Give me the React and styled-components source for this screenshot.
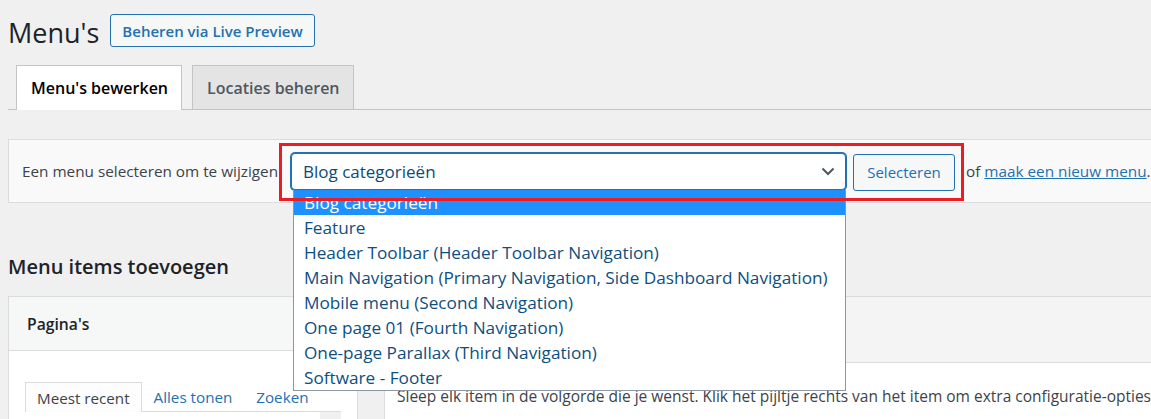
import React from "react";
import styled, { createGlobalStyle } from "styled-components";

const GlobalStyle = createGlobalStyle`
  body {
    margin: 0;
    background: #f0f0f1;
    font-family: "Open Sans", "Noto Sans", sans-serif;
    color: #3c434a;
    overflow: hidden;
  }
`;

const Page = styled.div`
  width: 1170px;
  padding-left: 8px;
  height: 419px;
  overflow: hidden;
`;

const HeaderRow = styled.div`
  display: flex;
  align-items: center;
  gap: 11px;
  padding-top: 14px;
  height: 33px;
`;

const Title = styled.h1`
  margin: 0;
  font-size: 27px;
  font-weight: 400;
  color: #1d2327;
  line-height: 33px;
  padding-top: 3px;
`;

const OutlineButton = styled.a`
  display: inline-flex;
  align-items: center;
  height: 31px;
  padding: 0 11px;
  border: 1px solid #2271b1;
  border-radius: 3px;
  background: #f6f7f7;
  color: #2271b1;
  font-size: 15px;
  font-weight: 600;
  text-decoration: none;
`;

const TabBar = styled.div`
  display: flex;
  gap: 10px;
  margin-top: 18px;
  padding-left: 8px;
  border-bottom: 1px solid #c3c4c7;
  height: 44px;
`;

const Tab = styled.div`
  display: flex;
  align-items: center;
  padding: 0 13px 0 14px;
  border: 1px solid #c3c4c7;
  border-bottom: none;
  background: ${({ active }) => (active ? "#fff" : "#e4e4e4")};
  color: ${({ active }) => (active ? "#000" : "#50575e")};
  font-size: 16px;
  font-weight: 600;
  margin-bottom: ${({ active }) => (active ? "-1px" : "0")};
  height: ${({ active }) => (active ? "44px" : "43px")};
`;

const ManagePanel = styled.div`
  display: flex;
  align-items: center;
  margin-top: 29px;
  height: 62px;
  border: 1px solid #dcdcde;
  background: #f9f9f9;
  padding-left: 13px;
  font-size: 15.3px;
  white-space: nowrap;
`;

const Label = styled.span`
  width: 257px;
  flex: none;
`;

const Highlight = styled.div`
  position: relative;
  display: flex;
  align-items: center;
  align-self: stretch;
  padding: 0 9px 0 12px;

  &::after {
    content: "";
    position: absolute;
    left: 0;
    right: 0;
    top: 3px;
    bottom: 1px;
    border: 3px solid #ec1c24;
    z-index: 10;
    pointer-events: none;
  }
`;

const SelectBox = styled.div`
  position: relative;
  display: flex;
  align-items: center;
  justify-content: space-between;
  width: 555px;
  height: 37px;
  border: 1px solid #2271b1;
  border-radius: 4px;
  box-shadow: 0 0 0 1px #2271b1;
  background: #fff;
  padding: 0 10px 0 11px;
  box-sizing: border-box;
  color: #0a4b78;
  font-size: 17px;
  margin-top: 1px;
`;

const DropdownList = styled.ul`
  position: absolute;
  top: 100%;
  left: 1px;
  width: 553px;
  margin: 1px 0 0;
  padding: 0;
  list-style: none;
  background: #fff;
  border: 1px solid #8a96a3;
  border-top: none;
  box-sizing: border-box;
  z-index: 5;
`;

const Option = styled.li`
  height: 25px;
  line-height: 25px;
  padding-left: 10px;
  font-size: 17.2px;
  white-space: nowrap;
  color: ${({ selected }) => (selected ? "#fff" : "#0e4f7f")};
  background: ${({ selected }) => (selected ? "#1e90ff" : "transparent")};
`;

const SubmitButton = styled.button`
  height: 37px;
  width: 102px;
  margin-left: 7px;
  border: 1px solid #2271b1;
  border-radius: 3px;
  background: #f6f7f7;
  color: #2271b1;
  font-family: inherit;
  font-size: 15px;
  margin-top: 2px;
`;

const Trailing = styled.span`
  padding-left: 2px;
`;

const Link = styled.a`
  color: #2271b1;
  text-decoration: underline;
`;

const Columns = styled.div`
  display: flex;
  align-items: flex-start;
`;

const LeftColumn = styled.div`
  width: 350px;
  flex: none;
`;

const SectionTitle = styled.h2`
  margin: 0;
  padding-top: 50px;
  height: 43px;
  font-size: 20px;
  font-weight: 600;
  color: #1d2327;
  line-height: 28px;
`;

const Accordion = styled.div`
  border: 1px solid #dcdcde;
  background: #fff;
  height: 140px;
`;

const AccordionHead = styled.div`
  height: 53px;
  display: flex;
  align-items: center;
  padding-left: 18px;
  background: #f6f7f7;
  border-bottom: 1px solid #dcdcde;
  font-size: 15.7px;
  font-weight: 600;
  color: #1d2327;
`;

const AccordionBody = styled.div`
  padding: 30px 17px 0 16px;
`;

const InnerTabs = styled.div`
  display: flex;
  align-items: flex-end;
  border-bottom: 1px solid #dcdcde;
  width: 316px;
`;

const InnerTab = styled.div`
  height: 29px;
  display: flex;
  align-items: center;
  padding: 0 11px;
  font-size: 15.2px;
  color: ${({ active }) => (active ? "#3c434a" : "#2271b1")};
  border: 1px solid ${({ active }) => (active ? "#dcdcde" : "transparent")};
  border-bottom: none;
  background: ${({ active }) => (active ? "#fdfdfd" : "transparent")};
  margin-bottom: ${({ active }) => (active ? "-1px" : "0")};
`;

const TabPanel = styled.div`
  display: flex;
  justify-content: flex-end;
  width: 316px;
  height: 10px;
`;

const Scrollbar = styled.div`
  width: 21px;
  background: #f0f0f1;
`;

const MenuEdit = styled.div`
  flex: 1;
  margin-left: 26px;
  margin-top: 93px;
  border: 1px solid #dcdcde;
  background: #fff;
`;

const MenuEditHead = styled.div`
  height: 65px;
  background: #f4f4f4;
  border-bottom: 1px solid #dcdcde;
`;

const MenuEditBody = styled.div`
  padding: 22px 12px;
  font-size: 15.5px;
  color: #3c434a;
  white-space: nowrap;
`;

const options = [
  "Blog categorieën",
  "Feature",
  "Header Toolbar (Header Toolbar Navigation)",
  "Main Navigation (Primary Navigation, Side Dashboard Navigation)",
  "Mobile menu (Second Navigation)",
  "One page 01 (Fourth Navigation)",
  "One-page Parallax (Third Navigation)",
  "Software - Footer",
];

function Chevron() {
  return (
    <svg width="14" height="9" viewBox="0 0 14 9">
      <polyline
        points="1.5,1.5 7,7 12.5,1.5"
        fill="none"
        stroke="#50575e"
        strokeWidth="2"
      />
    </svg>
  );
}

export default function App() {
  return (
    <>
      <GlobalStyle />
      <Page>
        <HeaderRow>
          <Title>Menu's</Title>
          <OutlineButton href="#">Beheren via Live Preview</OutlineButton>
        </HeaderRow>
        <TabBar>
          <Tab active>Menu's bewerken</Tab>
          <Tab>Locaties beheren</Tab>
        </TabBar>
        <ManagePanel>
          <Label>Een menu selecteren om te wijzigen</Label>
          <Highlight>
            <SelectBox>
              <span>Blog categorieën</span>
              <Chevron />
              <DropdownList>
                {options.map((o, i) => (
                  <Option key={o} selected={i === 0}>
                    {o}
                  </Option>
                ))}
              </DropdownList>
            </SelectBox>
            <SubmitButton>Selecteren</SubmitButton>
          </Highlight>
          <Trailing>
            of <Link href="#">maak een nieuw menu</Link>.
          </Trailing>
        </ManagePanel>
        <Columns>
          <LeftColumn>
            <SectionTitle>Menu items toevoegen</SectionTitle>
            <Accordion>
              <AccordionHead>Pagina's</AccordionHead>
              <AccordionBody>
                <InnerTabs>
                  <InnerTab active>Meest recent</InnerTab>
                  <InnerTab>Alles tonen</InnerTab>
                  <InnerTab>Zoeken</InnerTab>
                </InnerTabs>
                <TabPanel>
                  <Scrollbar />
                </TabPanel>
              </AccordionBody>
            </Accordion>
          </LeftColumn>
          <MenuEdit>
            <MenuEditHead />
            <MenuEditBody>
              Sleep elk item in de volgorde die je wenst. Klik het pijltje rechts
              van het item om extra configuratie-opties
            </MenuEditBody>
          </MenuEdit>
        </Columns>
      </Page>
    </>
  );
}
